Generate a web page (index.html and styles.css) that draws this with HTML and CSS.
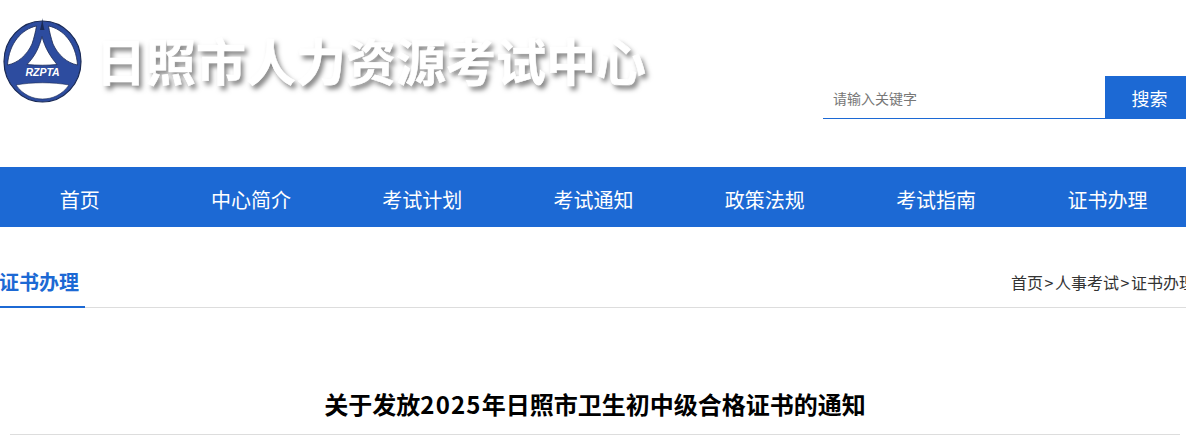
FILE: index.html
```html
<!DOCTYPE html>
<html lang="zh-CN">
<head>
<meta charset="utf-8">
<title>日照市人力资源考试中心</title>
<link rel="stylesheet" href="styles.css">
</head>
<body>
<div class="page">
  <header class="header">
    <div class="brand">
      <svg class="logo" viewBox="0 0 80 86" aria-hidden="true">
        <ellipse cx="40.500" cy="43.500" rx="38.500" ry="40.500" fill="#2d4c9f" stroke="#1a2a55" stroke-width="1.200"/>
        <path d="M34.500 8C20 11 7 25 5.500 47C16 45 25 37 30 26C32 20 33.500 14 34.500 8Z" fill="#fff" stroke="#1a2a55" stroke-width=".8"/>
        <path d="M46.500 8C61 11 74 25 75.500 47C65 45 56 37 51 26C49 20 47.500 14 46.500 8Z" fill="#fff" stroke="#1a2a55" stroke-width=".8"/>
        <path d="M40.300 0C40.800 5 41.500 8 42.500 12L38 12C39 8 39.800 5 40.300 0Z" fill="#1a2a55"/>
        <path d="M40 18.500C37 30 33 38 25 46.500C35 47.500 46 47.500 55 46.500C48 38 43 30 40 18.500Z" fill="#fff" stroke="#1a2a55" stroke-width=".8"/>
        <path d="M14 67C30 64 51 64 67 67C60 77 50 81 40.500 81C31 81 21 77 14 67Z" fill="#fff" stroke="#1a2a55" stroke-width=".6"/>
        <text class="logo-text" x="40.500" y="58" text-anchor="middle">RZPTA</text>
      </svg>
      <h1 class="site-title">日照市人力资源考试中心</h1>
    </div>
    <form class="search">
      <input class="search-input" type="text" placeholder="请输入关键字">
      <button class="search-btn" type="button">搜索</button>
    </form>
  </header>
  <nav class="nav">
    <a class="nav-item">首页</a>
    <a class="nav-item">中心简介</a>
    <a class="nav-item">考试计划</a>
    <a class="nav-item">考试通知</a>
    <a class="nav-item">政策法规</a>
    <a class="nav-item">考试指南</a>
    <a class="nav-item">证书办理</a>
  </nav>
  <div class="crumb-bar">
    <h2 class="section-name">证书办理</h2>
    <div class="crumbs">首页<span class="sep">&gt;</span>人事考试<span class="sep">&gt;</span>证书办理</div>
  </div>
  <article class="article">
    <h3 class="article-title">关于发放<span class="year">2025</span>年日照市卫生初中级合格证书的通知</h3>
  </article>
</div>
</body>
</html>
```
FILE: styles.css
```css
html, body { margin: 0; padding: 0; background: #fff; overflow: hidden; }
body { font-family: "Noto Sans CJK SC", "Liberation Sans", sans-serif; color: #333; }
.page { width: 1186px; height: 447px; overflow: hidden; }
.header { height: 167px; display: flex; justify-content: space-between; box-sizing: border-box; }
.brand { display: flex; align-items: flex-start; padding: 18px 0 0 2px; }
.logo { width: 80px; height: 86px; flex: none; }
.logo-text { font: italic bold 10.5px "Liberation Sans", sans-serif; fill: #fff; }
.site-title { margin: 5px 0 0 14px; font-size: 50px; line-height: 72px; font-weight: 700; color: #fff; white-space: nowrap; -webkit-text-stroke: .6px #fff; text-shadow: 3px 4px 5px rgba(0,0,0,.5); }
.search { display: flex; margin-top: 76px; height: 43px; }
.search-input { width: 282px; height: 43px; box-sizing: border-box; border: 0; border-bottom: 1px solid #1c69d4; padding: 1px 10px 0; font: 14px "Noto Sans CJK SC", sans-serif; outline: 0; }
.search-input::placeholder { color: #777; opacity: 1; }
.search-btn { width: 81px; height: 43px; border: 0; padding: 0 0 0 8px; background: #1c69d4; color: #fff; font: 18px "Noto Sans CJK SC", sans-serif; }
.nav { height: 60px; background: #1c69d4; display: flex; overflow: hidden; }
.nav-item { flex: none; width: 171.3px; text-align: center; color: #fff; font-size: 20px; line-height: 66px; white-space: nowrap; }
.nav-item:first-child { margin-left: -6px; }
.crumb-bar { margin-top: 34px; height: 47px; box-sizing: border-box; border-bottom: 1px solid #ddd; display: flex; justify-content: space-between; width: 1200px; }
.section-name { margin: 0; height: 47px; box-sizing: border-box; width: 85px; border-bottom: 2px solid #1c69d4; font-size: 20px; line-height: 42px; font-weight: 700; color: #1c69d4; white-space: nowrap; text-indent: -1px; }
.crumbs { font-size: 16px; line-height: 43px; color: #333; white-space: nowrap; width: 189px; }
.sep { display: inline-block; width: 12px; text-align: center; }
.article { margin: 0 6px 0 10px; padding-top: 75px; }
.article-title { margin: 0; border-bottom: 1px solid #ddd; text-align: center; font-size: 24px; line-height: 42px; height: 52px; box-sizing: border-box; font-weight: 700; color: #000; }
.year { letter-spacing: 1.2px; }
```
